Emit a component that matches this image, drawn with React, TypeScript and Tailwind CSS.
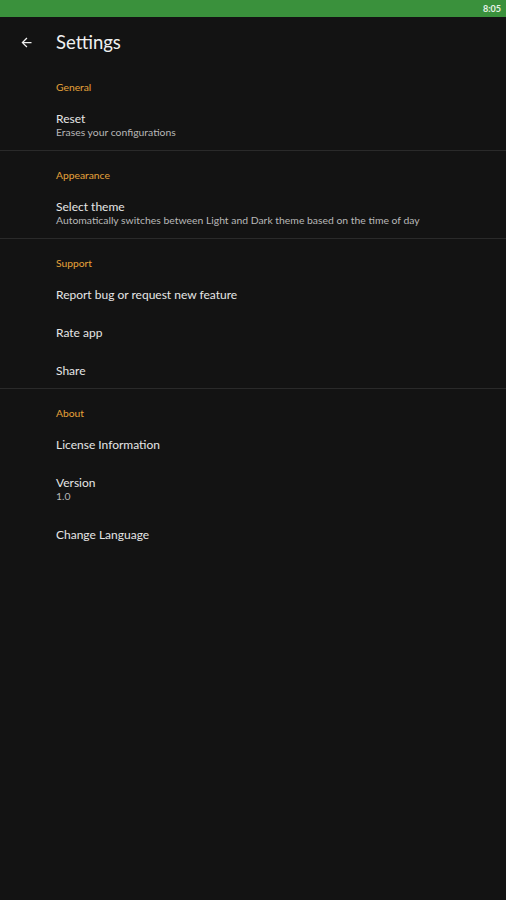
import React from "react";

type Item = { title: string; sub?: string };
type Section = { header: string; items: Item[]; divider: boolean };

const sections: Section[] = [
  { header: "General", items: [{ title: "Reset", sub: "Erases your configurations" }], divider: true },
  {
    header: "Appearance",
    items: [{ title: "Select theme", sub: "Automatically switches between Light and Dark theme based on the time of day" }],
    divider: true,
  },
  {
    header: "Support",
    items: [{ title: "Report bug or request new feature" }, { title: "Rate app" }, { title: "Share" }],
    divider: true,
  },
  {
    header: "About",
    items: [{ title: "License Information" }, { title: "Version", sub: "1.0" }, { title: "Change Language" }],
    divider: false,
  },
];

export default function App() {
  return (
    <div
      className="w-[506px] h-[900px] bg-[#131313] text-[#e6e6e6] overflow-hidden flex flex-col"
      style={{ fontFamily: "Lato, 'Noto Sans', sans-serif" }}
    >
      <div className="h-[17px] bg-[#3a913c] flex items-center justify-end pr-[5px]">
        <span className="text-[9px] font-bold text-[#e6f2e6] leading-none">8:05</span>
      </div>
      <div className="h-[46px] flex items-center pt-[4px]">
        <div className="w-[56px] flex justify-center">
          <svg width="15" height="15" viewBox="0 0 24 24" className="-ml-[4px]">
            <path d="M20 11H7.83l5.59-5.59L12 4l-8 8 8 8 1.41-1.41L7.83 13H20v-2z" fill="#f0f0f0" />
          </svg>
        </div>
        <span className="text-[18.5px] leading-none text-[#f0f0f0]">Settings</span>
      </div>
      <div className="flex flex-col">
        {sections.map((s) => (
          <div key={s.header} className="flex flex-col">
            <div className="pl-[56px] pt-[17px] pb-[7px]">
              <div className="text-[10.3px] leading-[14px] text-[#e5a23a]">{s.header}</div>
            </div>
            <div className="flex flex-col">
              {s.items.map((it) => (
                <div key={it.title} className="pl-[56px] pt-[10px] pb-[12px] last:pb-[9px]">
                  <div className="text-[12px] leading-[16px] text-[#e6e6e6]">{it.title}</div>
                  {it.sub && (
                    <div className="text-[10.4px] leading-[10px] text-[#b8b8b8] mb-[4px]">{it.sub}</div>
                  )}
                </div>
              ))}
            </div>
            {s.divider && <div className="h-px bg-[#2a2a2a]" />}
          </div>
        ))}
      </div>
    </div>
  );
}
